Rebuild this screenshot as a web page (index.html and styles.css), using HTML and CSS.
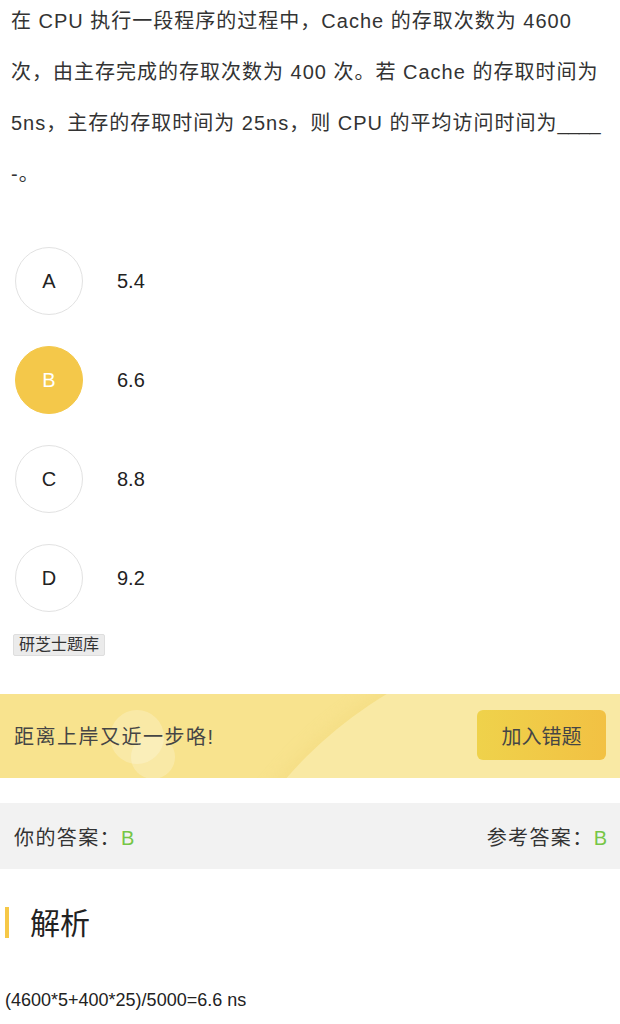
FILE: index.html
```html
<!DOCTYPE html>
<html lang="zh-CN">
<head>
<meta charset="utf-8">
<title>单选题</title>
<link rel="stylesheet" href="styles.css">
</head>
<body>
<div class="page">
  <p class="question">在 CPU 执行一段程序的过程中，Cache 的存取次数为 4600<br>次，由主存完成的存取次数为 400 次。若 Cache 的存取时间为<br>5ns，主存的存取时间为 25ns，则 CPU 的平均访问时间为<span class="blank">____</span><br>-。</p>

  <ul class="options">
    <li class="option"><span class="option-key">A</span><span class="option-text">5.4</span></li>
    <li class="option is-selected"><span class="option-key">B</span><span class="option-text">6.6</span></li>
    <li class="option"><span class="option-key">C</span><span class="option-text">8.8</span></li>
    <li class="option"><span class="option-key">D</span><span class="option-text">9.2</span></li>
  </ul>

  <div class="source"><span class="source-tag">研芝士题库</span></div>

  <div class="promo">
    <span class="promo-arc"></span>
    <span class="promo-dot promo-dot-a"></span>
    <span class="promo-dot promo-dot-b"></span>
    <span class="promo-text">距离上岸又近一步咯!</span>
    <button class="promo-btn" type="button">加入错题</button>
  </div>

  <div class="answers">
    <span>你的答案：<em class="answer-val">B</em></span>
    <span>参考答案：<em class="answer-val">B</em></span>
  </div>

  <h2 class="section-title">解析</h2>
  <p class="analysis">(4600*5+400*25)/5000=6.6 ns</p>
</div>
</body>
</html>
```

FILE: styles.css
```css
* {
  box-sizing: border-box;
}

html, body {
  margin: 0;
  padding: 0;
  background: #fff;
}

body {
  font-family: "Liberation Sans", Arial, "Noto Sans CJK SC", sans-serif;
  color: #333;
  width: 620px;
  height: 1024px;
  overflow: hidden;
}

.page {
  display: flex;
  flex-direction: column;
}

.question {
  margin: -4px 0 0;
  padding: 0 11px;
  font-size: 20px;
  line-height: 51px;
  letter-spacing: 1px;
  white-space: nowrap;
  color: #333;
}

.blank {
  letter-spacing: -0.5px;
}

.options {
  list-style: none;
  margin: 47px 0 0;
  padding: 0 0 0 15px;
  display: flex;
  flex-direction: column;
  gap: 31px;
}

.option {
  display: flex;
  align-items: center;
  height: 68px;
  gap: 34px;
}

.option-key {
  width: 68px;
  height: 68px;
  border-radius: 50%;
  border: 1px solid #e2e2e2;
  display: flex;
  align-items: center;
  justify-content: center;
  font-size: 20px;
  color: #222;
}

.option.is-selected .option-key {
  background: #f4c84a;
  border-color: #f4c84a;
  color: #fff;
}

.option-text {
  font-size: 20px;
  color: #222;
}

.source {
  margin-top: 22px;
  padding-left: 13px;
  display: flex;
}

.source-tag {
  display: inline-block;
  height: 22px;
  line-height: 20px;
  padding: 0 5px;
  font-size: 16px;
  color: #333;
  background: #ebebeb;
  border: 1px solid #dedede;
  border-radius: 2px;
}

.promo {
  position: relative;
  overflow: hidden;
  margin-top: 38px;
  height: 84px;
  background: #f8e38e;
  display: flex;
  align-items: center;
  justify-content: space-between;
  padding: 0 14px 2px 14px;
}

.promo-arc {
  position: absolute;
  left: 185px;
  top: -59px;
  width: 830px;
  height: 830px;
  border-radius: 50%;
  background: #f9e9a4;
  box-shadow: -6px -4px 14px rgba(240, 214, 120, 0.35);
}

.promo-dot {
  position: absolute;
  border-radius: 50%;
  background: rgba(255, 255, 255, 0.22);
}

.promo-dot-a {
  left: 110px;
  top: 16px;
  width: 54px;
  height: 54px;
}

.promo-dot-b {
  left: 131px;
  top: 41px;
  width: 44px;
  height: 44px;
}

.promo-text {
  position: relative;
  font-size: 20px;
  letter-spacing: 1.5px;
  color: #454545;
}

.promo-btn {
  position: relative;
  width: 129px;
  height: 50px;
  border: 0;
  border-radius: 6px;
  background: linear-gradient(90deg, #efd24b, #f2c143);
  font-family: inherit;
  font-size: 20px;
  color: #454545;
  cursor: pointer;
}

.answers {
  margin-top: 25px;
  height: 66px;
  background: #f2f2f2;
  display: flex;
  align-items: center;
  justify-content: space-between;
  padding: 0 13px 0 14px;
  font-size: 20px;
  letter-spacing: 1.4px;
  color: #333;
}

.answer-val {
  font-style: normal;
  letter-spacing: 0;
  color: #76c646;
}

.section-title {
  margin: 38px 0 0 5px;
  height: 31px;
  border-left: 4px solid #f6c847;
  padding-left: 21px;
  font-size: 30px;
  font-weight: normal;
  line-height: 34px;
  color: #222;
}

.analysis {
  margin: 50px 0 0;
  padding-left: 5px;
  font-size: 18px;
  line-height: 24px;
  color: #222;
}
```
